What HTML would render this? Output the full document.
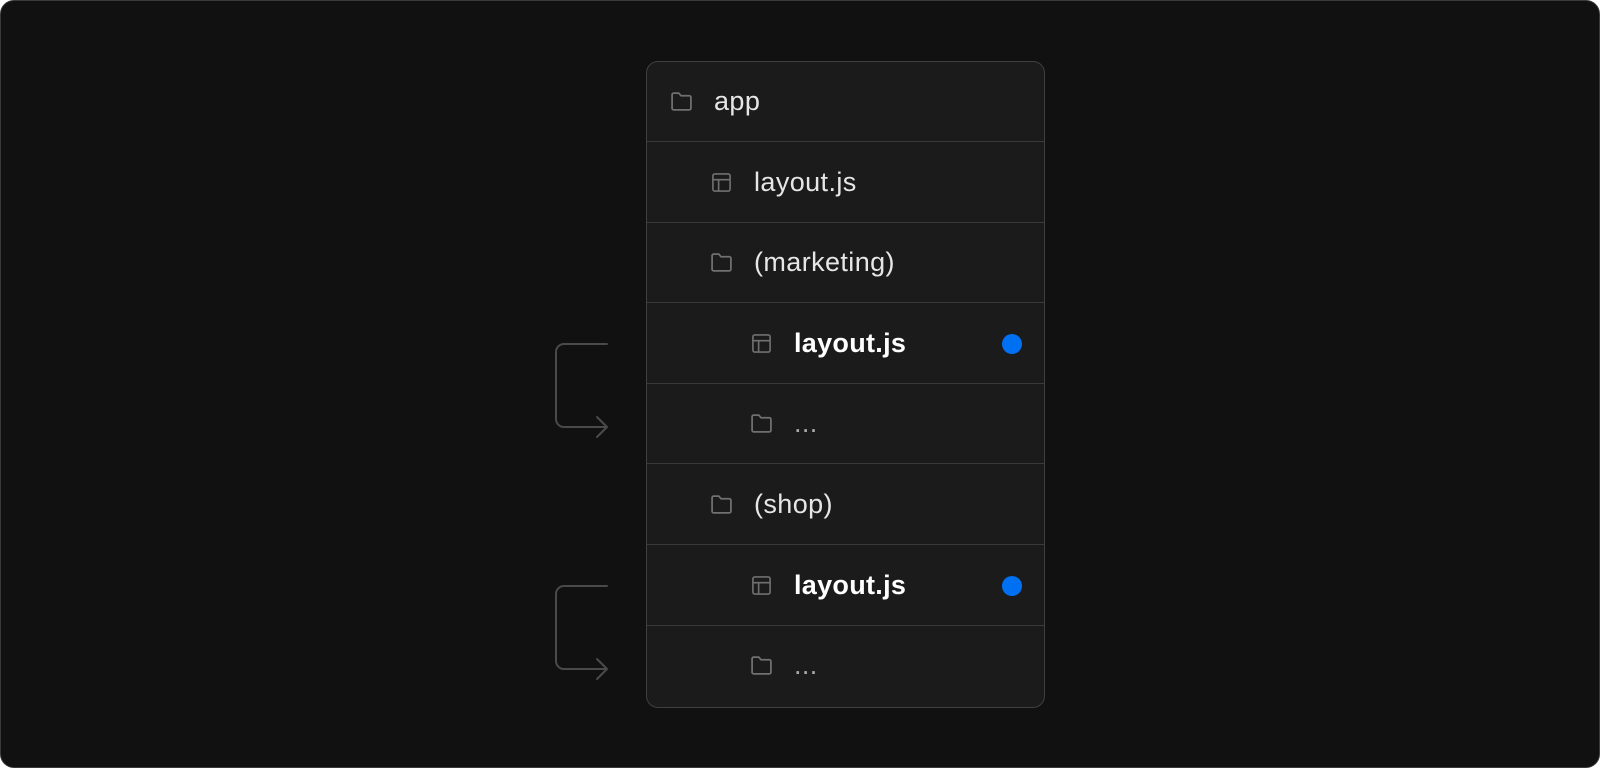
<!DOCTYPE html>
<html><head><style>
html,body{margin:0;padding:0;background:#fff;}
body{width:1600px;height:768px;position:relative;overflow:hidden;font-family:"Liberation Sans",sans-serif;}
.frame{position:absolute;left:0;top:0;width:1598px;height:766px;border:1px solid #3a3a3a;border-radius:14px;background:#111;overflow:hidden;}
.panel{position:absolute;left:645px;top:60px;width:397px;height:645px;border:1px solid #404040;border-radius:12px;background:#1b1b1b;overflow:hidden;}
.row{position:absolute;left:0;width:100%;height:80px;border-bottom:1px solid #3a3a3a;box-sizing:border-box;}
.ic{position:absolute;top:29px;}
.t{position:absolute;top:-1px;line-height:80px;font-size:27px;letter-spacing:0.4px;color:#e6e6e6;}
.b{font-weight:bold;color:#fff;letter-spacing:0.3px;}
.d{color:#aaa;}
.dot{position:absolute;left:355px;top:30px;width:20px;height:20px;border-radius:50%;background:#0070f3;}
</style></head><body>
<div class="frame">
<svg width="1600" height="768" style="position:absolute;left:0;top:0">
<g fill="none" stroke="#4a4a4a" stroke-width="2" stroke-linecap="round" stroke-linejoin="round">
<path d="M606 343H563a8 8 0 0 0-8 8V418a8 8 0 0 0 8 8H605M596 416l10 10-10 10"/>
<path d="M606 585H563a8 8 0 0 0-8 8V660a8 8 0 0 0 8 8H605M596 658l10 10-10 10"/>
</g></svg>
<div class="panel">
<svg width="0" height="0" style="position:absolute"><defs>
<symbol id="fo" viewBox="0 0 22 20"><path d="M2 3.5a1.5 1.5 0 0 1 1.5-1.5h5l2 2.5h8a1.5 1.5 0 0 1 1.5 1.5v10.5a1.5 1.5 0 0 1-1.5 1.5h-15A1.5 1.5 0 0 1 2 16.5z" fill="none" stroke="#707070" stroke-width="1.7" stroke-linejoin="round"/></symbol>
<symbol id="la" viewBox="0 0 22 22"><rect x="2" y="2" width="18" height="18" rx="2" fill="none" stroke="#707070" stroke-width="1.7"/><path d="M2 8h18M8 8v12" stroke="#707070" stroke-width="1.7"/></symbol>
</defs></svg>
<div class="row" style="top:0"><svg class="ic" style="left:23px;top:29px" width="23" height="21"><use href="#fo"/></svg><div class="t" style="left:67px">app</div></div>
<div class="row" style="top:80.6px"><svg class="ic" style="left:64px" width="21" height="21"><use href="#la"/></svg><div class="t" style="left:107px">layout.js</div></div>
<div class="row" style="top:161.2px"><svg class="ic" style="left:63px" width="23" height="21"><use href="#fo"/></svg><div class="t" style="left:107px">(marketing)</div></div>
<div class="row" style="top:241.8px"><svg class="ic" style="left:104px" width="21" height="21"><use href="#la"/></svg><div class="t b" style="left:147px">layout.js</div><div class="dot"></div></div>
<div class="row" style="top:322.4px"><svg class="ic" style="left:103px" width="23" height="21"><use href="#fo"/></svg><div class="t d" style="left:147px">...</div></div>
<div class="row" style="top:403px"><svg class="ic" style="left:63px" width="23" height="21"><use href="#fo"/></svg><div class="t" style="left:107px">(shop)</div></div>
<div class="row" style="top:483.6px"><svg class="ic" style="left:104px" width="21" height="21"><use href="#la"/></svg><div class="t b" style="left:147px">layout.js</div><div class="dot"></div></div>
<div class="row" style="top:564.2px;border-bottom:none"><svg class="ic" style="left:103px" width="23" height="21"><use href="#fo"/></svg><div class="t d" style="left:147px">...</div></div>
</div>
</div>
</body></html>
